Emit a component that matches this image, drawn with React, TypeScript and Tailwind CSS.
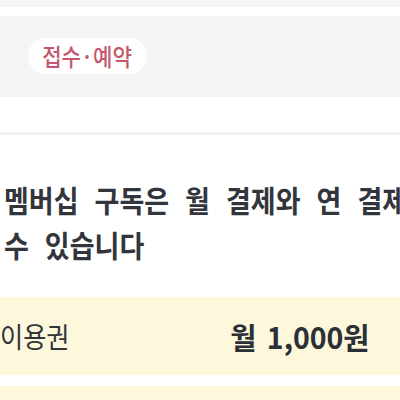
const FONT = "font-['Noto_Sans_CJK_KR','Noto_Sans',sans-serif]";

export default function App() {
  return (
    <div className={`h-[400px] w-[400px] overflow-hidden bg-white ${FONT}`}>
      <div className="h-[7px] bg-[#f4f5f7]" />
      <div className="h-[9px] bg-white" />

      <div className="h-[81px] bg-[#f4f5f7] pl-[28px] pt-[22px]">
        <div className="flex h-[36px] w-[119px] items-center justify-center rounded-full bg-white">
          <span className="inline-block scale-x-[0.88] whitespace-nowrap text-[24px] font-medium leading-none text-[#c4586b]">
            접수·예약
          </span>
        </div>
      </div>

      <div className="h-[38px] border-b-[3px] border-[#eef0f2] bg-white" />

      <div className="pl-[4px] pt-[42px]">
        <h2 className="origin-left scale-x-[0.9] whitespace-nowrap text-[30px] font-bold leading-[45px] text-[#32363c] [word-spacing:11px]">
          멤버십 구독은 월 결제와 연 결제 중 선택할
          <br />
          수 있습니다
        </h2>
      </div>

      <div className="mt-[30px] flex h-[78px] items-center justify-between bg-[#fdf7dc] pr-[30px]">
        <span className="inline-block origin-left scale-x-[0.9] whitespace-nowrap text-[28px] text-[#30343b]">
          이용권
        </span>
        <span className="inline-block origin-right scale-x-[0.95] whitespace-nowrap text-[30px] font-bold text-[#2b2f36] [word-spacing:4px]">
          월 1,000원
        </span>
      </div>

      <div className="h-[11px] bg-white" />
      <div className="h-[40px] bg-[#fdf7dc]" />
    </div>
  );
}
